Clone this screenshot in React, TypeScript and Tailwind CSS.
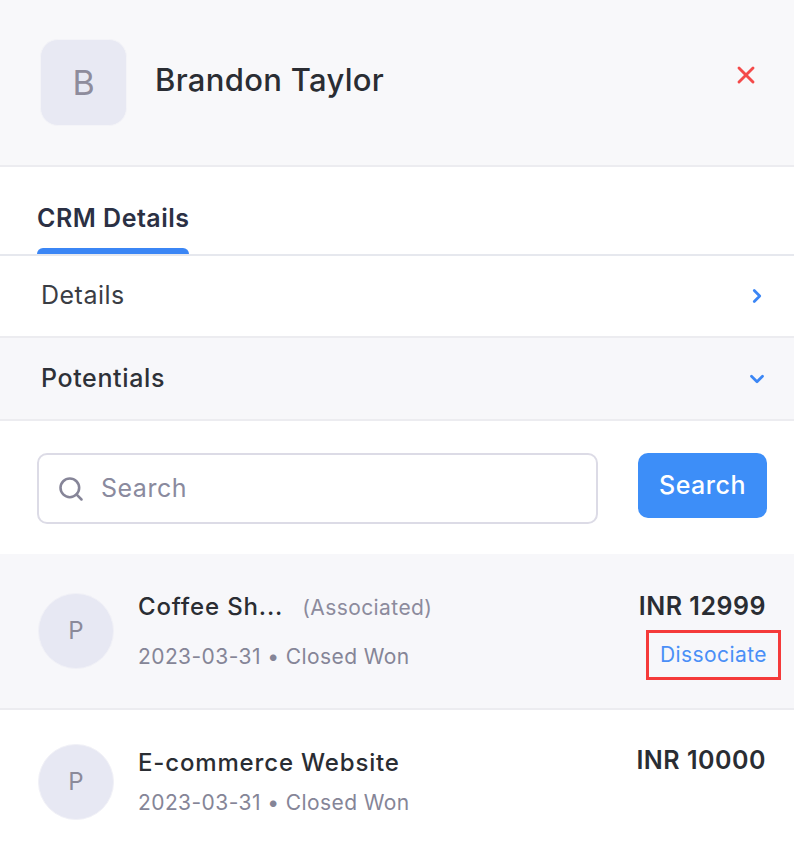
import { ChevronDown, ChevronRight, Search, X } from 'lucide-react';

type Potential = {
  name: string;
  associated?: boolean;
  date: string;
  stage: string;
  amount: string;
};

const potentials: Potential[] = [
  { name: 'Coffee Sh...', associated: true, date: '2023-03-31', stage: 'Closed Won', amount: 'INR 12999' },
  { name: 'E-commerce Website', date: '2023-03-31', stage: 'Closed Won', amount: 'INR 10000' },
];

function PotentialRow({ item }: { item: Potential }) {
  const active = item.associated;
  return (
    <div
      className={
        active
          ? 'flex h-[156px] items-center border-b-2 border-[#ececf0] bg-[#f7f7fa] pl-[38px] pr-[28px]'
          : 'flex h-[133px] items-start bg-white pl-[38px] pr-[28px] pt-[34px]'
      }
    >
      <div className="flex h-[76px] w-[76px] shrink-0 items-center justify-center rounded-full border border-[#f1f1f7] bg-[#e7e8f3] text-[24px] text-[#8b8a9a]">
        P
      </div>
      <div className={active ? 'ml-[24px] flex flex-1 flex-col gap-[16px]' : 'ml-[24px] flex flex-1 flex-col gap-[6px] pt-[1px]'}>
        <div className="flex items-baseline">
          <span className="text-[24px] font-medium tracking-[0.035em] text-[#2a2d33]">{item.name}</span>
          {item.associated && (
            <span className="ml-[19px] text-[21px] tracking-[0.02em] text-[#8c8b9d]">(Associated)</span>
          )}
        </div>
        <div className="text-[21px] tracking-[0.02em] text-[#858597]">
          {item.date} • {item.stage}
        </div>
      </div>
      <div className={active ? 'flex flex-col items-end pt-[7px]' : 'flex flex-col items-end'}>
        <span className="text-[25px] font-semibold leading-[32px] tracking-[0.02em] text-[#2a2d33]">{item.amount}</span>
        {item.associated && (
          <button
            type="button"
            className="mr-[-15px] mt-[8px] border-[3px] border-[#f53a3a] px-[11px] py-[6px] text-[21px] leading-[32px] tracking-[0.02em] text-[#4a8ff7]"
          >
            Dissociate
          </button>
        )}
      </div>
    </div>
  );
}

export default function App() {
  return (
    <div className="flex h-[844px] w-[794px] flex-col overflow-hidden bg-white font-['Inter',sans-serif]">
      <header className="flex h-[167px] shrink-0 items-center border-b-2 border-[#ececf0] bg-[#f8f8fa] pl-[40px] pr-[34px]">
        <div className="flex h-[87px] w-[87px] items-center justify-center rounded-[18px] border border-[#f4f4f8] bg-[#e8e9f3] text-[34px] text-[#8e8c9c]">
          B
        </div>
        <h1 className="ml-[28px] flex-1 pb-[4px] text-[31px] font-medium tracking-[0.01em] text-[#2a2d33]">Brandon Taylor</h1>
        <X className="mb-[16px] h-[28px] w-[28px] text-[#f44a4a]" strokeWidth={2.5} />
      </header>

      <nav className="flex h-[89px] shrink-0 items-end border-b-2 border-[#e6e8ee] px-[37px]">
        <div className="flex flex-col">
          <span className="pb-[11px] text-[25px] font-semibold tracking-[0.02em] text-[#2b3044]">CRM Details</span>
          <span className="h-[6px] w-[152px] rounded-t-[6px] bg-[#3b86f5]" />
        </div>
      </nav>

      <div className="flex h-[82px] shrink-0 items-center justify-between border-b-2 border-[#ececf0] bg-white pl-[41px] pr-[26px]">
        <span className="text-[25px] tracking-[0.02em] text-[#3a3d44]">Details</span>
        <ChevronRight className="h-[22px] w-[22px] text-[#3b86f5]" strokeWidth={3} />
      </div>

      <div className="flex h-[83px] shrink-0 items-center justify-between border-b-2 border-[#ececf0] bg-[#f7f7fa] pl-[41px] pr-[26px]">
        <span className="text-[25px] font-medium tracking-[0.025em] text-[#2e3138]">Potentials</span>
        <ChevronDown className="h-[22px] w-[22px] text-[#3b86f5]" strokeWidth={3} />
      </div>

      <div className="flex h-[133px] shrink-0 items-start gap-[40px] bg-white pl-[37px] pr-[27px] pt-[32px]">
        <label className="flex h-[71px] flex-1 items-center rounded-[10px] border-2 border-[#dcdbe6] bg-white pl-[18px]">
          <Search className="h-[28px] w-[28px] text-[#868598]" strokeWidth={2.2} />
          <input
            placeholder="Search"
            className="ml-[16px] flex-1 bg-transparent text-[25px] tracking-[0.02em] text-[#2a2d33] outline-none placeholder:text-[#8a8a9e]"
          />
        </label>
        <button
          type="button"
          className="h-[65px] w-[129px] rounded-[10px] bg-[#3d8ef8] text-[25px] font-medium tracking-[0.02em] text-white"
        >
          Search
        </button>
      </div>

      {potentials.map((item) => (
        <PotentialRow key={item.name} item={item} />
      ))}
    </div>
  );
}
